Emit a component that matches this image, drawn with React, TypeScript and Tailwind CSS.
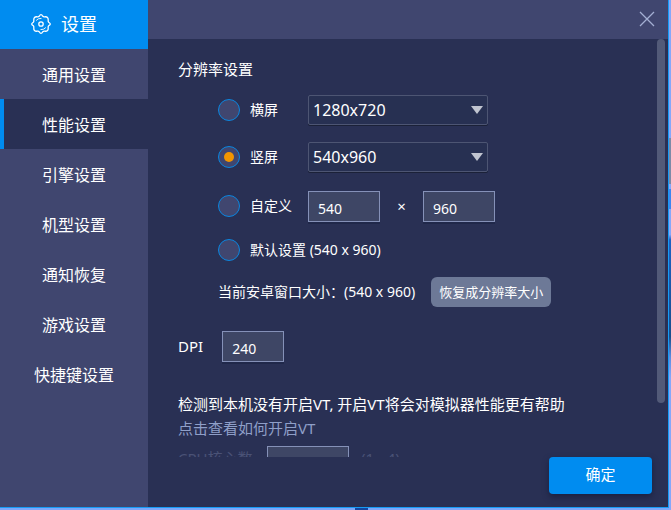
import React, { useState } from 'react';

const menuItems = ['通用设置', '性能设置', '引擎设置', '机型设置', '通知恢复', '游戏设置', '快捷键设置'];

const numberBox =
  'block h-[31px] border border-[#8591b8] bg-[#3e4665] px-[9px] pt-[3px] text-sm text-white shadow-[0_2px_0_#20284a] outline-none';

function GearIcon() {
  return (
    <svg className="h-5 w-5" viewBox="0 0 20 20" fill="none" stroke="#fff" strokeWidth="1.3" strokeLinejoin="round">
      <path d="M8.2 2.3 Q10 -.9 11.8 2.3 Q12.5 3 13.7 2.8 Q17.6 2.4 17.2 6.3 Q17 7.5 17.7 8.2 Q20.9 10 17.7 11.8 Q17 12.5 17.2 13.7 Q17.6 17.6 13.7 17.2 Q12.5 17 11.8 17.7 Q10 20.9 8.2 17.7 Q7.5 17 6.3 17.2 Q2.4 17.6 2.8 13.7 Q3 12.5 2.3 11.8 Q-.9 10 2.3 8.2 Q3 7.5 2.8 6.3 Q2.4 2.4 6.3 2.8 Q7.5 3 8.2 2.3 Z" />
      <circle cx="10" cy="10" r="2.2" />
      <path d="M5.2 6.5 A6 6 0 0 1 10.5 4.4" strokeWidth="0.9" />
      <path d="M14.8 13.5 A6 6 0 0 1 9.5 15.6" strokeWidth="0.9" />
    </svg>
  );
}

interface ModeRadioProps {
  value: string;
  label: string;
  mode: string;
  onChange: (value: string) => void;
}

function ModeRadio({ value, label, mode, onChange }: ModeRadioProps) {
  return (
    <label className="flex items-center gap-[10px] text-sm whitespace-nowrap">
      <span className="grid h-[22px] w-[22px] place-items-center">
        <input
          type="radio"
          name="mode"
          value={value}
          checked={mode === value}
          onChange={() => onChange(value)}
          className="peer col-start-1 row-start-1 h-[22px] w-[22px] appearance-none rounded-full border border-[#0a86e0] bg-[#40466f]"
        />
        <span className="pointer-events-none col-start-1 row-start-1 hidden h-[10px] w-[10px] rounded-full bg-[#f29500] peer-checked:block" />
      </span>
      {label}
    </label>
  );
}

function SizeSelect({ label, options }: { label: string; options: string[] }) {
  return (
    <div className="grid w-[180px] items-center">
      <select
        aria-label={label}
        className="col-start-1 row-start-1 h-[30px] w-full appearance-none rounded-xs border border-[#4d5573] bg-[#273052] px-1 text-base text-white shadow-[0_1px_0_#1b2138] outline-none"
      >
        {options.map(option => (
          <option key={option}>{option}</option>
        ))}
      </select>
      <svg className="pointer-events-none col-start-1 row-start-1 mr-[5px] h-2 w-3 justify-self-end" viewBox="0 0 12 8">
        <path d="M0 0H12L6 8Z" fill="#c0c4d0" />
      </svg>
    </div>
  );
}

export default function App() {
  const [active, setActive] = useState('性能设置');
  const [mode, setMode] = useState('portrait');

  return (
    <div className="flex h-screen flex-col bg-[linear-gradient(#85a8fa_0_27%,#7b8ba8_27%_36%,#85a8fa_36%_37%,#3d86f0_37%_41%,#85a8fa_41%_46%,#1d62c4_47%,#174f8c_66%,#5b8de0_70%,#85a8fa_74%)] pr-[2px]">
      <div className="flex min-h-0 flex-1 border-r border-b border-[#169bf5] bg-[#293054] font-['Noto_Sans','Noto_Sans_CJK_SC',sans-serif] text-white">
        <aside className="w-[148px] shrink-0 bg-[#40466f]">
          <h1 className="flex h-[49px] items-center gap-[10px] bg-[#008cf0] pb-[2px] pl-[31px] text-lg">
            <GearIcon />
            设置
          </h1>
          <nav>
            {menuItems.map(item => (
              <button
                key={item}
                onClick={() => setActive(item)}
                className={`block h-[50px] w-full border-l-4 pr-1 pt-[2px] text-base ${
                  item === active ? 'border-[#008cf0] bg-[#293054]' : 'border-transparent'
                }`}
              >
                {item}
              </button>
            ))}
          </nav>
        </aside>

        <div className="flex min-w-0 flex-1 flex-col">
          <header className="flex h-[39px] shrink-0 items-center justify-end bg-[#40466f] pr-[13px] pb-[2px]">
            <button aria-label="关闭">
              <svg className="h-4 w-4" viewBox="0 0 16 16" stroke="#a3afd3" strokeWidth="1.3">
                <path d="M1 1L15 15M15 1L1 15" />
              </svg>
            </button>
          </header>

          <main className="flex min-h-0 flex-1 overflow-hidden pr-[3px]">
            <div className="min-w-0 flex-1 pl-[30px] text-[15px]">
              <h2 className="pt-[18px] leading-6">分辨率设置</h2>

              <div className="pl-10">
                <div className="mt-[14px] grid grid-cols-[90px_1fr] items-center gap-y-[17px]">
                  <ModeRadio value="landscape" label="横屏" mode={mode} onChange={setMode} />
                  <SizeSelect label="横屏分辨率" options={['1280x720', '1920x1080']} />
                  <ModeRadio value="portrait" label="竖屏" mode={mode} onChange={setMode} />
                  <SizeSelect label="竖屏分辨率" options={['540x960', '720x1280']} />
                  <ModeRadio value="custom" label="自定义" mode={mode} onChange={setMode} />
                  <div className="flex items-center pt-[2px]">
                    <input aria-label="宽度" defaultValue="540" className={`${numberBox} w-[72px]`} />
                    <span className="w-[43px] text-center">×</span>
                    <input aria-label="高度" defaultValue="960" className={`${numberBox} w-[72px]`} />
                  </div>
                </div>
                <div className="mt-[17px]">
                  <ModeRadio value="default" label="默认设置 (540 x 960)" mode={mode} onChange={setMode} />
                </div>
                <div className="mt-4 flex items-center gap-4 text-sm">
                  <span>当前安卓窗口大小：(540 x 960)</span>
                  <button className="h-[30px] w-[120px] rounded-md bg-[#6d7997] text-[13px]">恢复成分辨率大小</button>
                </div>
              </div>

              <label className="mt-6 flex items-center gap-[19px]">
                DPI
                <input defaultValue="240" className={`${numberBox} w-[62px]`} />
              </label>

              <p className="mt-[30px] leading-6">检测到本机没有开启VT, 开启VT将会对模拟器性能更有帮助</p>
              <a href="#vt" className="block leading-6 text-[#8f9fc8]">点击查看如何开启VT</a>

              <div className="mt-[6px] flex items-start leading-6 text-[#4a5276]">
                <label htmlFor="cpu" className="w-[89px]">CPU核心数</label>
                <input id="cpu" disabled className={`${numberBox} w-[82px]`} />
                <span className="pl-3">(1 - 4)</span>
              </div>
            </div>
            <div className="h-[364px] w-2 shrink-0 rounded-full bg-[#525a78]" />
          </main>

          <footer className="flex h-[50px] shrink-0 items-start justify-end pr-4">
            <button className="h-[37px] w-[103px] rounded-sm bg-[#008cf0] pb-[2px] text-[15px] shadow-[0_3px_6px_#1b2140]">确定</button>
          </footer>
        </div>
      </div>
      <div className="h-[2px] shrink-0 bg-[linear-gradient(90deg,#7ea6fa_53%,#1446a0_53%_55%,#7ea6fa_55%)]" />
    </div>
  );
}
